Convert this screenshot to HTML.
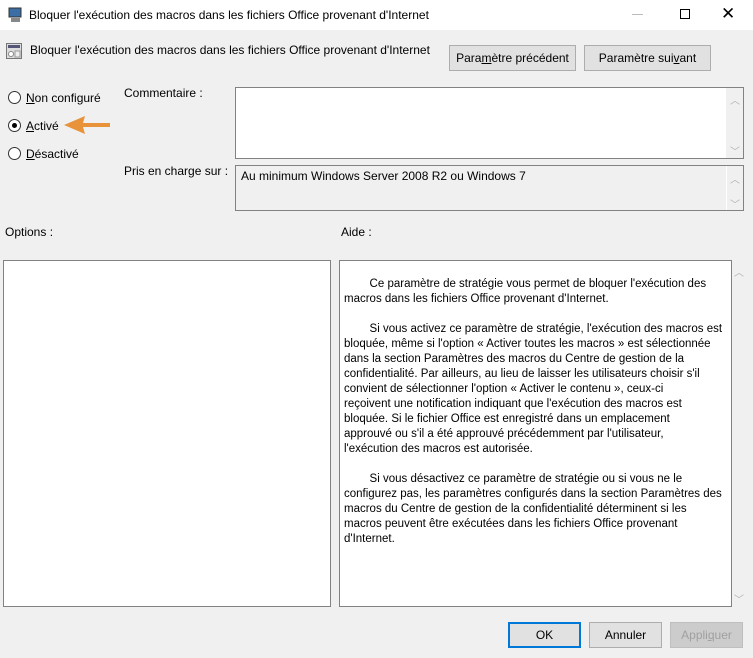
<!DOCTYPE html>
<html><head><meta charset="utf-8"><style>
*{margin:0;padding:0;box-sizing:border-box}
body{width:753px;height:658px;background:#f0f0f0;font-family:"Liberation Sans",sans-serif;font-size:12px;color:#000;position:relative;overflow:hidden}
.a{position:absolute;white-space:nowrap}
.btn{position:absolute;background:#e1e1e1;border:1px solid #adadad;text-align:center;line-height:24px;font-size:12px}
.radio{position:absolute;width:13px;height:13px;border:1px solid #333;border-radius:50%;background:#fff}
.sb{position:absolute;color:#b0b0b0;font-size:10px}
.h{position:absolute;left:344px;white-space:nowrap;font-size:11.5px;line-height:15px}
</style></head><body>
<div class="a" style="left:0;top:0;width:753px;height:30px;background:#fff"></div>
<svg class="a" style="left:8px;top:7px" width="16" height="16"><rect x="1" y="1" width="12" height="9" fill="#3a6ea5" stroke="#333"/><rect x="3" y="11" width="9" height="4" fill="#888"/></svg>
<div class="a" style="left:29px;top:8px;font-size:12px">Bloquer l'exécution des macros dans les fichiers Office provenant d'Internet</div>
<div class="a" style="left:632px;top:14px;width:11px;height:1px;background:#bbb"></div>
<div class="a" style="left:680px;top:9px;width:10px;height:10px;border:1px solid #000"></div>
<div class="a" style="left:721px;top:4px;font-size:17px;font-weight:300">✕</div>

<svg class="a" style="left:6px;top:43px" width="16" height="17"><rect x="0.5" y="0.5" width="15" height="15" fill="#ddd" stroke="#777"/><rect x="2" y="2" width="12" height="3" fill="#557"/><circle cx="5" cy="11" r="2.5" fill="#fff" stroke="#888"/><rect x="9" y="8" width="5" height="6" fill="#eee" stroke="#999"/></svg>
<div class="a" style="left:30px;top:43px">Bloquer l'exécution des macros dans les fichiers Office provenant d'Internet</div>
<div class="btn" style="left:449px;top:45px;width:127px;height:26px">Para<u>m</u>ètre précédent</div>
<div class="btn" style="left:584px;top:45px;width:127px;height:26px">Paramètre sui<u>v</u>ant</div>

<div class="radio" style="left:8px;top:91px"></div>
<div class="a" style="left:26px;top:91px"><u>N</u>on configuré</div>
<div class="radio" style="left:8px;top:119px"></div>
<div class="a" style="left:12px;top:123px;width:5px;height:5px;border-radius:50%;background:#000"></div>
<div class="a" style="left:26px;top:119px"><u>A</u>ctivé</div>
<svg class="a" style="left:62px;top:115px" width="50" height="20"><polygon points="2,10 23,1 21,8 48,8 48,12 21,12 23,19" fill="#e8923a"/></svg>
<div class="radio" style="left:8px;top:147px"></div>
<div class="a" style="left:26px;top:147px"><u>D</u>ésactivé</div>

<div class="a" style="left:124px;top:86px">Commentaire :</div>
<div class="a" style="left:235px;top:87px;width:509px;height:72px;background:#fff;border:1px solid #828282"></div>
<div class="a" style="left:726px;top:88px;width:17px;height:70px;background:#f0f0f0"></div>
<div class="sb" style="left:730px;top:92px">︿</div><div class="sb" style="left:730px;top:143px">﹀</div>
<div class="a" style="left:124px;top:164px">Pris en charge sur :</div>
<div class="a" style="left:235px;top:165px;width:509px;height:46px;background:#f0f0f0;border:1px solid #828282"></div>
<div class="a" style="left:726px;top:166px;width:1px;height:44px;background:#fff"></div>
<div class="a" style="left:241px;top:169px">Au minimum Windows Server 2008 R2 ou Windows 7</div>
<div class="sb" style="left:730px;top:171px">︿</div><div class="sb" style="left:730px;top:196px">﹀</div>

<div class="a" style="left:5px;top:225px">Options :</div>
<div class="a" style="left:341px;top:225px">Aide :</div>
<div class="a" style="left:3px;top:260px;width:328px;height:347px;background:#fff;border:1px solid #828282"></div>
<div class="a" style="left:339px;top:260px;width:393px;height:347px;background:#fff;border:1px solid #828282"></div>
<div class="sb" style="left:734px;top:264px">︿</div><div class="sb" style="left:734px;top:591px">﹀</div>

<div class="h" style="top:277px">&nbsp;&nbsp;&nbsp;&nbsp;&nbsp;&nbsp;&nbsp;&nbsp;Ce paramètre de stratégie vous permet de bloquer l'exécution des</div>
<div class="h" style="top:292px">macros dans les fichiers Office provenant d'Internet.</div>
<div class="h" style="top:322px">&nbsp;&nbsp;&nbsp;&nbsp;&nbsp;&nbsp;&nbsp;&nbsp;Si vous activez ce paramètre de stratégie, l'exécution des macros est</div>
<div class="h" style="top:337px">bloquée, même si l'option « Activer toutes les macros » est sélectionnée</div>
<div class="h" style="top:352px">dans la section Paramètres des macros du Centre de gestion de la</div>
<div class="h" style="top:367px">confidentialité. Par ailleurs, au lieu de laisser les utilisateurs choisir s'il</div>
<div class="h" style="top:382px">convient de sélectionner l'option « Activer le contenu », ceux-ci</div>
<div class="h" style="top:397px">reçoivent une notification indiquant que l'exécution des macros est</div>
<div class="h" style="top:412px">bloquée. Si le fichier Office est enregistré dans un emplacement</div>
<div class="h" style="top:427px">approuvé ou s'il a été approuvé précédemment par l'utilisateur,</div>
<div class="h" style="top:442px">l'exécution des macros est autorisée.</div>
<div class="h" style="top:472px">&nbsp;&nbsp;&nbsp;&nbsp;&nbsp;&nbsp;&nbsp;&nbsp;Si vous désactivez ce paramètre de stratégie ou si vous ne le</div>
<div class="h" style="top:487px">configurez pas, les paramètres configurés dans la section Paramètres des</div>
<div class="h" style="top:502px">macros du Centre de gestion de la confidentialité déterminent si les</div>
<div class="h" style="top:517px">macros peuvent être exécutées dans les fichiers Office provenant</div>
<div class="h" style="top:532px">d'Internet.</div>

<div class="btn" style="left:508px;top:622px;width:73px;height:26px;border:2px solid #0078d7;line-height:22px">OK</div>
<div class="btn" style="left:589px;top:622px;width:73px;height:26px">Annuler</div>
<div class="btn" style="left:670px;top:622px;width:73px;height:26px;background:#ccc;border-color:#bfbfbf;color:#a0a0a0">Appli<u>q</u>uer</div>
</body></html>
